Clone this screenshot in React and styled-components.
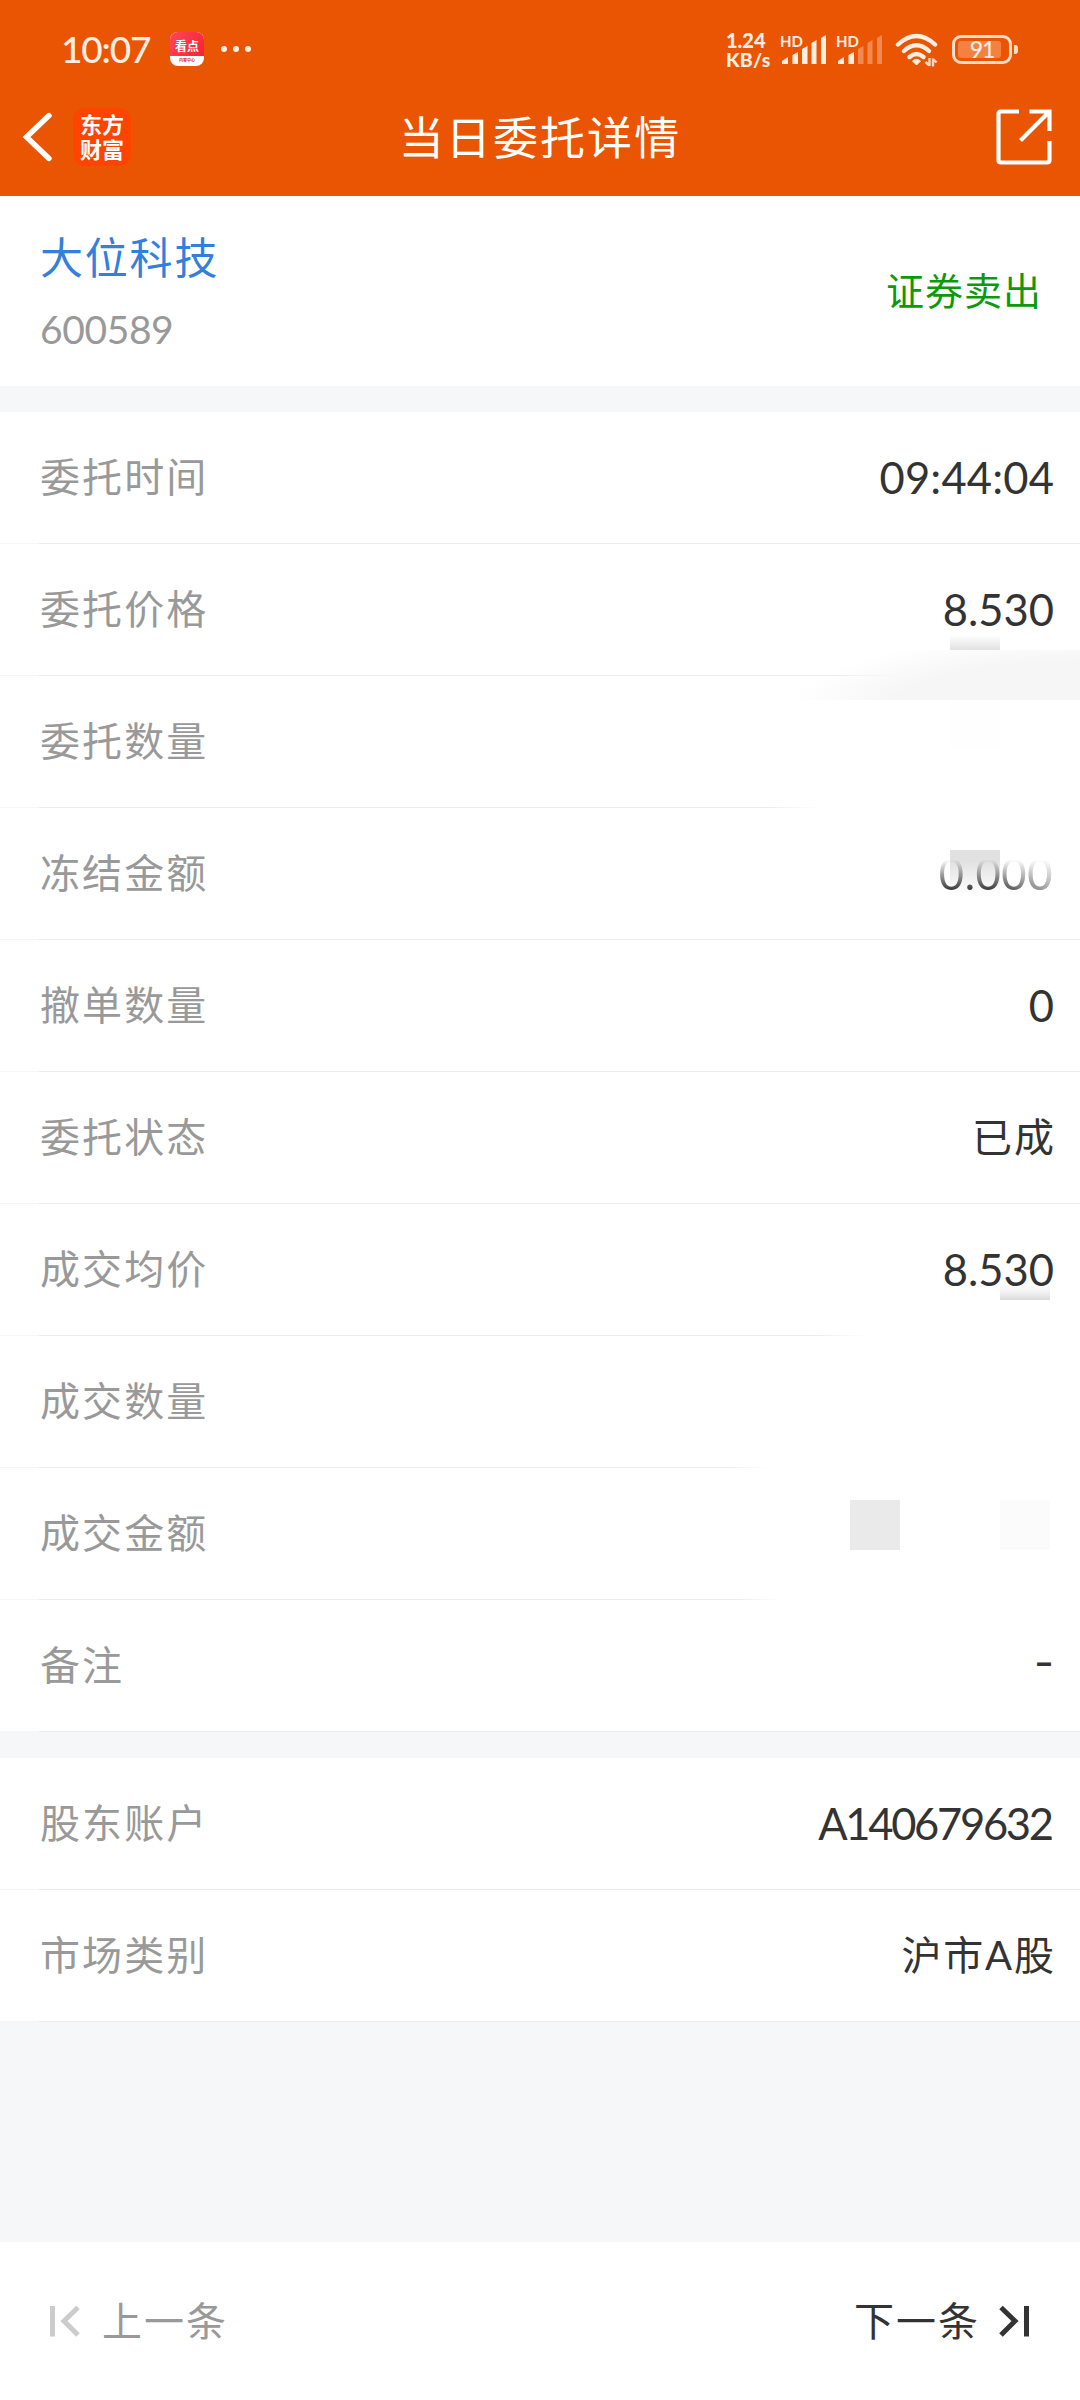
import React from 'react';
import styled, { createGlobalStyle } from 'styled-components';

const orderRows = [
  { label: '委托时间', value: '09:44:04', spacing: 0.2 },
  { label: '委托价格', value: '8.530', line: [860, 905] },
  { label: '委托数量', line: [785, 822] },
  { label: '冻结金额', value: '0.000', faded: true, spacing: 0.6 },
  { label: '撤单数量', value: '0' },
  { label: '委托状态', value: '已成', cjk: true, spacing: 2 },
  { label: '成交均价', value: '8.530', line: [830, 870] },
  { label: '成交数量', line: [740, 768] },
  { label: '成交金额', line: [755, 782] },
  { label: '备注', value: '-', dash: true },
];

// smudges left over the hidden values, keyed by row index
const smudges = {
  1: [{ x: 950, y: 91, h: 15, fill: 'linear-gradient(#fff, #e2e2e2)' }],
  2: [{ x: 950, y: 24, h: 50, fill: '#fefefe' }],
  3: [{ x: 950, y: 42, h: 45, fill: 'linear-gradient(#e1e1e1 25%, #fff)' }],
  6: [{ x: 1000, y: 76, h: 20, fill: 'linear-gradient(#fff 20%, #f0f0f0 65%, #dadada)' }],
  8: [
    { x: 850, y: 32, h: 50, fill: '#eaeaea' },
    { x: 1000, y: 32, h: 50, fill: '#fbfbfb' },
  ],
};

const Signal = ({ strength }) => (
  <SignalIcon viewBox="0 0 48 32">
    <text x="0" y="13.5">HD</text>
    {[
      'M2 31V28L8 24V31Z',
      'M12.500 31V22L18 19V31Z',
      'M22 31V16L27.500 13V31Z',
      'M31.500 31V10L36.500 7V31Z',
      'M41 31V5L46 2V31Z',
    ].map((d, i) => (
      <path key={d} d={d} opacity={i < strength ? 1 : 0.35} />
    ))}
  </SignalIcon>
);

const StatusBar = () => (
  <StatusContainer>
    <Clock>10:07</Clock>
    <NewsIcon>
      <NewsTop>看点</NewsTop>
      <NewsBottom>内容中心</NewsBottom>
    </NewsIcon>
    <MoreDots>
      <i />
      <i />
      <i />
    </MoreDots>
    <StatusRight>
      <NetSpeed>
        <Speed>1.24</Speed>
        <Unit>KB/s</Unit>
      </NetSpeed>
      <Signal strength={5} />
      <Signal strength={2} />
      <WifiIcon viewBox="0 0 44 34">
        <g fill="none" stroke="#ffeee2" strokeWidth="4.4" strokeLinecap="round">
          <path d="M3 11.500Q21.500-5.500 40 11.500" />
          <path d="M9 18Q21.500 6.500 34 18" />
          <path d="M14.500 24Q21.500 18 28.500 24" />
        </g>
        <path d="M17.500 28Q21.500 24.500 25.500 28L21.500 32Z" fill="#ffeee2" stroke="#ffeee2" />
        <path d="M34.500 25V33M34.500 32.500L30.500 29M38 33.500V25.500M38 26L41.500 29.500" stroke="#ffd9c2" strokeWidth="2.4" fill="none" />
      </WifiIcon>
      <Battery>
        <BatteryFill />
        <BatteryText>91</BatteryText>
      </Battery>
      <BatteryTip />
    </StatusRight>
  </StatusContainer>
);

const NavBar = () => (
  <NavContainer>
    <NavSide>
      <BackIcon viewBox="0 0 28 48">
        <path d="M26 2.500L3.500 24L26 45.500" />
      </BackIcon>
      <Logo>
        <span>东方</span>
        <span>财富</span>
      </Logo>
    </NavSide>
    <Title>当日委托详情</Title>
    <NavSide $end>
      <ShareIcon viewBox="0 0 56 56">
        <path d="M23 2.500H5Q2.500 2.500 2.500 5V51Q2.500 53.500 5 53.500H51Q53.500 53.500 53.500 51V32" />
        <path d="M33.500 2.500H53.500V22M53 3L24.500 31.500" />
      </ShareIcon>
    </NavSide>
  </NavContainer>
);

const DetailRow = ({ label, value, line, faded, cjk, dash, spacing, patches = [], children }) => (
  <Row $line={line}>
    {patches.map((p) => (
      <Smudge key={p.x} $x={p.x} $y={p.y} $h={p.h} $fill={p.fill} />
    ))}
    <Label>{label}</Label>
    {value && (
      <Value $faded={faded} $cjk={cjk} $dash={dash} $spacing={spacing}>
        {value}
      </Value>
    )}
    {children}
  </Row>
);

const App = () => {
  return (
    <Page>
      <GlobalStyle />
      <Header>
        <StatusBar />
        <NavBar />
      </Header>
      <StockPanel>
        <div>
          <StockName>大位科技</StockName>
          <StockCode>600589</StockCode>
        </div>
        <Direction>证券卖出</Direction>
      </StockPanel>
      <Section>
        {orderRows.map((row, i) => (
          <DetailRow key={row.label} {...row} patches={smudges[i]}>
            {i === 1 && <Haze />}
          </DetailRow>
        ))}
      </Section>
      <Section>
        <DetailRow label="股东账户" value="A140679632" spacing={-2.3} />
        <DetailRow label="市场类别" value="沪市A股" cjk spacing={1.8} />
      </Section>
      <Footer>
        <PagerButton $disabled>
          <PagerIcon viewBox="0 0 30 32">
            <path d="M2.500 1V31.500M28 2.500L14 16L28 30" />
          </PagerIcon>
          上一条
        </PagerButton>
        <PagerButton>
          下一条
          <PagerIcon viewBox="0 0 30 32">
            <path d="M27.500 1V31.500M2 2.500L16 16L2 30" />
          </PagerIcon>
        </PagerButton>
      </Footer>
    </Page>
  );
};

const GlobalStyle = createGlobalStyle`
  * {
    box-sizing: border-box;
  }

  body {
    margin: 0;
    background: #f6f7f9;
    font-family: Lato, 'Noto Sans CJK SC', sans-serif;
  }
`;

const Page = styled.div`
  display: flex;
  flex-direction: column;
  width: 1080px;
  height: 2400px;
  overflow: hidden;
  background: #f6f7f9;
`;

const Header = styled.header`
  height: 196px;
  background: #ea5504;
  color: #fff;
`;

const StatusContainer = styled.div`
  display: flex;
  align-items: center;
  height: 98px;
  padding: 0 62px 0 61px;
  color: #ffeee2;
`;

const Clock = styled.div`
  width: 109px;
  font-size: 37px;
  font-weight: 500;
  line-height: 40px;
  letter-spacing: -1.2px;
  white-space: nowrap;
`;

const NewsIcon = styled.div`
  display: flex;
  flex-direction: column;
  width: 34px;
  height: 34px;
  border-radius: 8px;
  overflow: hidden;
  background: #fff;
  text-align: center;
  white-space: nowrap;
`;

const NewsTop = styled.div`
  height: 24px;
  background: linear-gradient(120deg, #ff4654, #f52337);
  color: #fff;
  font-size: 12px;
  font-weight: 700;
  line-height: 29px;
`;

const NewsBottom = styled.div`
  color: #d8313f;
  font-size: 4px;
  font-weight: 700;
  line-height: 10px;
`;

const MoreDots = styled.div`
  display: flex;
  gap: 6px;
  margin-left: 17px;

  i {
    width: 6px;
    height: 6px;
    border-radius: 50%;
    background: #ffeee2;
  }
`;

const StatusRight = styled.div`
  display: flex;
  align-items: center;
  margin-left: auto;
`;

const NetSpeed = styled.div`
  width: 54px;
  font-weight: 900;
  line-height: 19px;
  white-space: nowrap;
`;

const Speed = styled.div`
  font-size: 20px;
  line-height: 20px;
`;

const Unit = styled.div`
  font-size: 19.5px;
  letter-spacing: 0.3px;
`;

const SignalIcon = styled.svg`
  width: 48px;
  height: 32px;
  margin-right: 8px;
  overflow: visible;
  fill: #ffeee2;

  text {
    font-family: Lato, sans-serif;
    font-size: 15px;
    font-weight: 700;
  }
`;

const WifiIcon = styled.svg`
  width: 44px;
  height: 34px;
  margin: 2px 13px 0 3px;
`;

const Battery = styled.div`
  display: flex;
  align-items: center;
  justify-content: center;
  position: relative;
  width: 60px;
  height: 29px;
  border: 3px solid #ffdcc6;
  border-radius: 9px;
`;

const BatteryFill = styled.div`
  position: absolute;
  top: 3px;
  left: 3px;
  width: 43px;
  height: 17px;
  border-radius: 3px;
  background: #f48142;
`;

const BatteryText = styled.span`
  position: relative;
  font-size: 23px;
  font-weight: 500;
  line-height: 22px;
  letter-spacing: -1.2px;
`;

const BatteryTip = styled.div`
  width: 4px;
  height: 9px;
  margin-left: 2px;
  border-radius: 0 3px 3px 0;
  background: #ffdcc6;
`;

const NavContainer = styled.nav`
  display: flex;
  align-items: center;
  height: 78px;
  padding: 0 28px 0 23px;
`;

const NavSide = styled.div`
  display: flex;
  flex: 1;
  align-items: center;
  justify-content: ${({ $end }) => ($end ? 'flex-end' : 'flex-start')};
`;

const BackIcon = styled.svg`
  width: 28px;
  height: 48px;
  overflow: visible;
  fill: none;
  stroke: #fff;
  stroke-width: 5.4;
  stroke-linecap: round;
`;

const Logo = styled.div`
  display: flex;
  flex-direction: column;
  align-items: center;
  justify-content: center;
  width: 58px;
  height: 58px;
  margin-left: 22px;
  border-radius: 12px;
  background: #ff4401;
  font-size: 22px;
  font-weight: 700;
  line-height: 25px;
`;

const Title = styled.h1`
  margin: 2px -5px 0 0;
  font-size: 45px;
  font-weight: 400;
  line-height: 60px;
  letter-spacing: 2.1px;
`;

const ShareIcon = styled.svg`
  width: 56px;
  height: 56px;
  fill: none;
  stroke: #fff;
  stroke-width: 4.2;
`;

const StockPanel = styled.section`
  display: flex;
  align-items: center;
  justify-content: space-between;
  height: 190px;
  padding: 0 38px 0 40px;
  background: #fff;
`;

const StockName = styled.div`
  padding-top: 4px;
  color: #337fdb;
  font-size: 43px;
  line-height: 64px;
  letter-spacing: 1.8px;
`;

const StockCode = styled.div`
  margin-top: 7px;
  color: #999;
  font-size: 39px;
  line-height: 64px;
  letter-spacing: -0.4px;
`;

const Direction = styled.div`
  padding-bottom: 3px;
  color: #0b9a0b;
  font-size: 38px;
  line-height: 56px;
  letter-spacing: 1px;
`;

const Section = styled.section`
  margin-top: 26px;
`;

const Row = styled.div`
  display: flex;
  align-items: center;
  justify-content: space-between;
  position: relative;
  height: 132px;
  padding: 0 26px 3px 40px;
  background:
    ${({ $line }) =>
      $line
        ? `linear-gradient(90deg, #f6f6f6 39px, #ebebeb 39px, #ebebeb ${$line[0] - 20}px, transparent ${$line[1]}px)`
        : 'linear-gradient(90deg, #f6f6f6 39px, #ebebeb 39px)'}
    bottom / 100% 1px no-repeat #fff;
`;

const Label = styled.div`
  color: #999;
  font-size: 40px;
  line-height: 60px;
  letter-spacing: 2.1px;
`;

const Value = styled.div`
  position: relative;
  margin-right: ${({ $spacing = 0, $faded }) => ($faded ? 1 : -$spacing)}px;
  padding-bottom: ${({ $dash }) => ($dash ? 5 : 0)}px;
  color: #333;
  font-family: ${({ $dash }) => ($dash ? 'Inter, sans-serif' : 'inherit')};
  font-size: ${({ $cjk }) => ($cjk ? 40 : 43.5)}px;
  line-height: 60px;
  letter-spacing: ${({ $spacing = 0 }) => $spacing}px;
  ${({ $faded }) =>
    $faded &&
    `
    background: linear-gradient(90deg, transparent 50%, rgba(255, 255, 255, 0.6)),
      linear-gradient(rgba(51, 51, 51, 0) 28%, #333 80%);
    background-clip: text;
    color: transparent;
  `}
`;

const Smudge = styled.div`
  position: absolute;
  top: ${({ $y }) => $y}px;
  left: ${({ $x }) => $x}px;
  width: 50px;
  height: ${({ $h }) => $h}px;
  background: ${({ $fill }) => $fill};
`;

const Haze = styled.div`
  position: absolute;
  top: 106px;
  right: 0;
  z-index: 1;
  width: 285px;
  height: 50px;
  background: radial-gradient(ellipse 290px 76px at 285px 60px, #f6f6f6 65%, rgba(246, 246, 246, 0) 100%);
`;

const Footer = styled.footer`
  display: flex;
  align-items: center;
  justify-content: space-between;
  height: 158px;
  margin-top: auto;
  padding: 0 51px 0 50px;
  background: #fff;
`;

const PagerButton = styled.button`
  display: flex;
  align-items: center;
  gap: ${({ $disabled }) => ($disabled ? 22 : 19)}px;
  padding: 0;
  border: 0;
  background: none;
  color: ${({ $disabled }) => ($disabled ? '#999' : '#333')};
  font-family: inherit;
  font-size: 40px;
  line-height: 60px;
  letter-spacing: 2px;

  svg {
    stroke: ${({ $disabled }) => ($disabled ? '#ccc' : '#333')};
  }
`;

const PagerIcon = styled.svg`
  width: 30px;
  height: 32px;
  fill: none;
  stroke-width: 5;
`;

export default App;
